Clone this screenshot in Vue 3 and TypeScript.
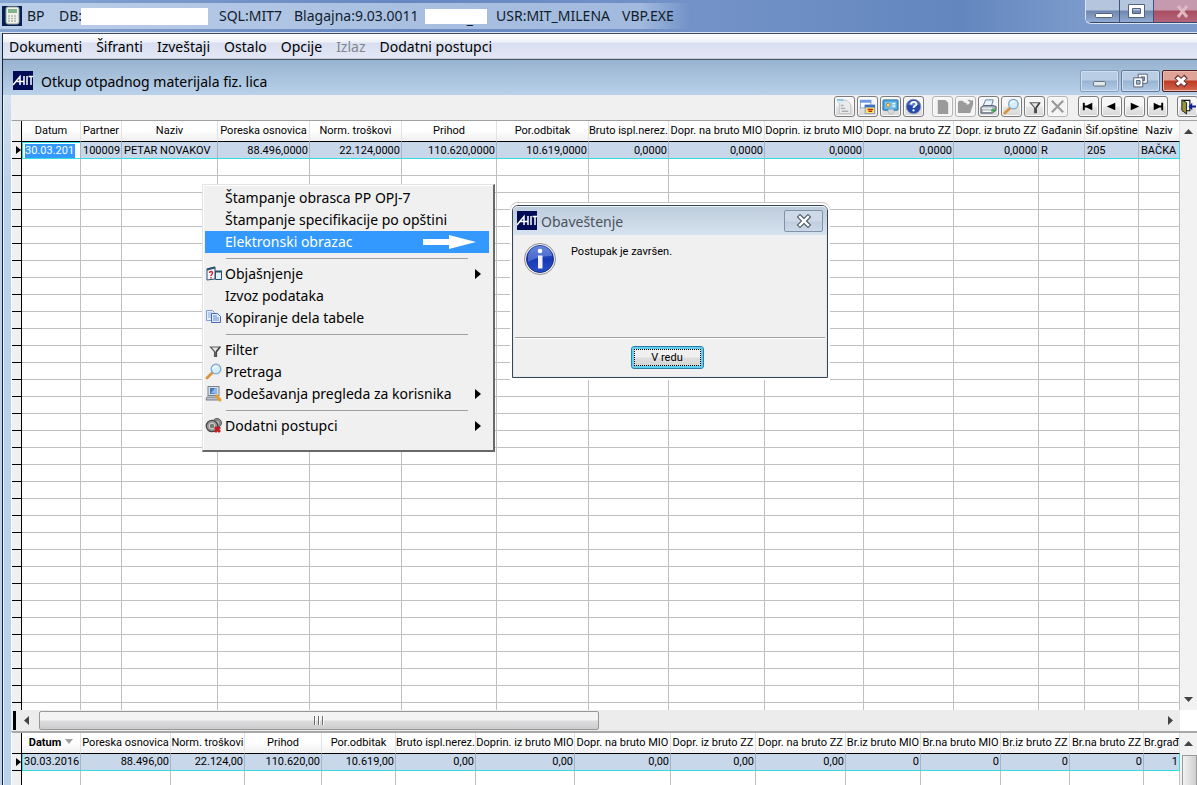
<script setup lang="ts">
import { ref } from 'vue'

interface Column {
  label: string
  value: string
  width: number | null
  align?: 'left' | 'right'
}

const mainColumns: Column[] = [
  { label: 'Datum', value: '30.03.201', width: 59, align: 'left' },
  { label: 'Partner', value: '100009', width: 41 },
  { label: 'Naziv', value: 'PETAR NOVAKOV', width: 96, align: 'left' },
  { label: 'Poreska osnovica', value: '88.496,0000', width: 92 },
  { label: 'Norm. troškovi', value: '22.124,0000', width: 92 },
  { label: 'Prihod', value: '110.620,0000', width: 95 },
  { label: 'Por.odbitak', value: '10.619,0000', width: 92 },
  { label: 'Bruto ispl.nerez.', value: '0,0000', width: 80 },
  { label: 'Dopr. na bruto MIO', value: '0,0000', width: 96 },
  { label: 'Doprin. iz bruto MIO', value: '0,0000', width: 99 },
  { label: 'Dopr. na bruto ZZ', value: '0,0000', width: 90 },
  { label: 'Dopr. iz bruto ZZ', value: '0,0000', width: 85 },
  { label: 'Gađanin', value: 'R', width: 46, align: 'left' },
  { label: 'Šif.opštine', value: '205', width: 54, align: 'left' },
  { label: 'Naziv', value: 'BAČKA', width: null, align: 'left' },
]

const totalColumns: Column[] = [
  { label: 'Datum', value: '30.03.2016', width: 59, align: 'left' },
  { label: 'Poreska osnovica', value: '88.496,00', width: 90 },
  { label: 'Norm. troškovi', value: '22.124,00', width: 74 },
  { label: 'Prihod', value: '110.620,00', width: 77 },
  { label: 'Por.odbitak', value: '10.619,00', width: 74 },
  { label: 'Bruto ispl.nerez.', value: '0,00', width: 80 },
  { label: 'Doprin. iz bruto MIO', value: '0,00', width: 99 },
  { label: 'Dopr. na bruto MIO', value: '0,00', width: 96 },
  { label: 'Dopr. iz bruto ZZ', value: '0,00', width: 85 },
  { label: 'Dopr. na bruto ZZ', value: '0,00', width: 90 },
  { label: 'Br.iz bruto MIO', value: '0', width: 75 },
  { label: 'Br.na bruto MIO', value: '0', width: 80 },
  { label: 'Br.iz bruto ZZ', value: '0', width: 69 },
  { label: 'Br.na bruto ZZ', value: '0', width: 74 },
  { label: 'Br.građ', value: '1', width: null },
]

const menus = ['Dokumenti', 'Šifranti', 'Izveštaji', 'Ostalo', 'Opcije', 'Izlaz', 'Dodatni postupci']

interface Entry {
  text?: string
  icon?: string
  sub?: boolean
  active?: boolean
}

const entries: Entry[] = [
  { text: 'Štampanje obrasca PP OPJ-7' },
  { text: 'Štampanje specifikacije po opštini' },
  { text: 'Elektronski obrazac', active: true },
  {},
  { text: 'Objašnjenje', icon: 'explain', sub: true },
  { text: 'Izvoz podataka' },
  { text: 'Kopiranje dela tabele', icon: 'copy' },
  {},
  { text: 'Filter', icon: 'filter' },
  { text: 'Pretraga', icon: 'search' },
  { text: 'Podešavanja pregleda za korisnika', icon: 'settings', sub: true },
  {},
  { text: 'Dodatni postupci', icon: 'gears', sub: true },
]

const toolGroups = [
  [
    { id: 'form', label: 'Obrazac' },
    { id: 'windows', label: 'Prozori' },
    { id: 'card', label: 'Kartica' },
    { id: 'help', label: 'Pomoć' },
  ],
  [
    { id: 'new', label: 'Novi', off: true },
    { id: 'open', label: 'Otvori', off: true },
    { id: 'print', label: 'Štampa' },
    { id: 'search', label: 'Pretraga' },
    { id: 'filter', label: 'Filter' },
    { id: 'delete', label: 'Brisanje', off: true },
  ],
  [
    { id: 'first', label: 'Prvi' },
    { id: 'prev', label: 'Prethodni' },
    { id: 'next', label: 'Sledeći' },
    { id: 'last', label: 'Poslednji' },
  ],
  [{ id: 'exit', label: 'Izlaz' }],
]

const dialogOpen = ref(true)
</script>

<template>
  <div class="app">
    <header class="titlebar">
      <svg class="app-icon" viewBox="0 0 20 20">
        <rect width="20" height="20" fill="#081f56" />
        <rect x="4" y="1" width="13" height="17" rx="2" fill="#eef0ea" stroke="#9ba79d" />
        <rect x="6" y="3" width="9" height="4" fill="#83b58d" />
        <path d="M6 10h2m1 0h2m1 0h2M6 12.500h2m1 0h2m1 0h2M6 15h2m1 0h2m1 0h2" stroke="#b3b5ae" stroke-width="1.500" />
      </svg>
      <span>BP</span>
      <span>DB:</span>
      <span class="mask"></span>
      <span>SQL:MIT7</span>
      <span>Blagajna:9.03.0011</span>
      <span class="mask short"><i>_</i></span>
      <span>USR:MIT_MILENA</span>
      <span>VBP.EXE</span>
      <div class="top-buttons">
        <button aria-label="Umanji"><svg viewBox="0 0 34 22"><rect x="9.500" y="13.500" width="17" height="4" rx="1" fill="#fff" stroke="#54647e" /></svg></button>
        <button aria-label="Uvećaj"><svg viewBox="0 0 34 22"><path d="M8.500 4.500h16v13h-16zM12.500 8.500h8v5h-8z" fill="#fff" fill-rule="evenodd" stroke="#54647e" /></svg></button>
        <button class="red" aria-label="Zatvori"><svg viewBox="0 0 44 22"><path d="M24 6l9 11M33 6l-9 11" stroke="#dfb9c0" stroke-width="3" /></svg></button>
      </div>
    </header>

    <div class="body">
      <nav class="menubar">
        <button v-for="m in menus" :key="m" :disabled="m === 'Izlaz'">{{ m }}</button>
      </nav>

      <section class="child">
        <header class="child-title">
          <svg class="mit" viewBox="0 0 20 19">
            <rect width="20" height="19" fill="#020b56" />
            <path d="M0 14L7 5.500V14M3 10.500h8M11 5v9M14 5v9M15.500 5.500h4.500M18 5v9" fill="none" stroke="#fff" stroke-width="1.500" />
          </svg>
          <h1>Otkup otpadnog materijala fiz. lica</h1>
          <div class="child-buttons">
            <button aria-label="Umanji prozor"><svg viewBox="0 0 38 22"><rect x="12.500" y="11.500" width="13" height="5" rx="1" fill="#e4e9ec" stroke="#5b6672" /></svg></button>
            <button aria-label="Vrati prozor"><svg viewBox="0 0 38 22"><path d="M16.500 3.500h10v10h-10z" fill="#fff" stroke="#4d5d70" /><path d="M19.500 6.500h4v4h-4z" fill="#8aa3bf" stroke="#4d5d70" /><path d="M11.500 7.500h10v10h-10z" fill="#fff" stroke="#4d5d70" /><path d="M14.500 10.500h4v4h-4z" fill="#a9bfd8" stroke="#4d5d70" /></svg></button>
            <button class="red" aria-label="Zatvori prozor"><svg viewBox="0 0 38 22"><path d="M13 6l11 10M24 6L13 16" stroke="#6e3434" stroke-width="5.500" /><path d="M14 7l9 8M23 7l-9 8" stroke="#fff" stroke-width="3.600" /></svg></button>
          </div>
        </header>

        <div class="workspace">
          <div class="toolbar">
            <div v-for="(g, i) in toolGroups" :key="i" class="group">
              <button v-for="t in g" :key="t.id" :aria-label="t.label" :disabled="'off' in t && t.off">
                <svg viewBox="0 0 18 18">
                  <g v-if="t.id === 'form'">
                    <path d="M3.500 2.500h8l4 4v10h-12z" fill="#e9ebed" stroke="#c0c5ca" />
                    <path d="M1 1.500h7v4H1z" fill="#d7ebf5" />
                    <path d="M1 2h7" stroke="#8fc3de" stroke-width="2" />
                    <path d="M5 8h3M5 11h5M6 14h7" stroke="#adadad" stroke-width="1.500" />
                  </g>
                  <g v-else-if="t.id === 'windows'">
                    <rect x="1.500" y="2.500" width="11" height="8" fill="#fff" stroke="#8aa7dc" />
                    <rect x="1" y="2" width="12" height="3" fill="#6d9be3" />
                    <rect x="6.500" y="8.500" width="10" height="8" fill="#ffe566" stroke="#8d9dbd" />
                    <rect x="6" y="7" width="11" height="3" fill="#3e70c9" />
                    <path d="M9 12h6M10 14h4" stroke="#bd2610" stroke-width="1.500" />
                  </g>
                  <g v-else-if="t.id === 'card'">
                    <rect x="1" y="2" width="16" height="11" rx="1" fill="#48a9df" stroke="#276d9e" />
                    <rect x="3" y="4" width="12" height="7" fill="#79c4ed" />
                    <circle cx="6.500" cy="7.500" r="2" fill="#ffe4a0" stroke="#c37c36" />
                    <path d="M11 6h3M11 8.500h3" stroke="#fff" stroke-width="1.300" />
                    <path d="M7 12h5l1 2-2 3H8l-2-3z" fill="#d7dadc" stroke="#9da8ad" stroke-width=".6" />
                  </g>
                  <g v-else-if="t.id === 'help'">
                    <circle cx="9" cy="9" r="7.700" fill="#2548a9" stroke="#8e97ab" />
                    <path d="M3 7a6.500 6 0 0 1 12 0q-6 3-12 0" fill="#6182cd" />
                    <path d="M6.500 7c0-4 5.500-3.500 5.500-.5 0 2-3 2-3 4" fill="none" stroke="#fff" stroke-width="1.900" />
                    <circle cx="9" cy="13.200" r="1.200" fill="#fff" />
                  </g>
                  <path v-else-if="t.id === 'new'" d="M4 2h8l3 3v12H4z" fill="#9b9b9b" />
                  <path v-else-if="t.id === 'open'" d="M1 5l1-2h4l2 2h2v2h7l-3 9H1zM11 3c2-2 3-1 4 0l2-1v5h-5l2-2q-1-2-3-2" fill="#9b9b9b" />
                  <g v-else-if="t.id === 'print'">
                    <path d="M6 2h8l-2 7H3z" fill="#e8f4ff" stroke="#5c7fa4" />
                    <path d="M1 10l3-2h10l3 1v4l-4 3H1z" fill="#a3adb8" stroke="#4f5967" />
                    <path d="M2 10h11v2H2z" fill="#e7eaee" />
                    <path d="M3 14h9" stroke="#fff" stroke-width="1.500" />
                    <rect x="12" y="12" width="4" height="2" fill="#22b53a" />
                  </g>
                  <g v-else-if="t.id === 'search'">
                    <path d="M2 16l5-5" stroke="#dc933d" stroke-width="3" stroke-linecap="round" />
                    <circle cx="11" cy="6.500" r="5" fill="#d2edfc" stroke="#81a5c8" stroke-width="1.400" />
                    <path d="M8 6c0-2 2-3 4-2" fill="none" stroke="#fff" stroke-width="1.300" />
                  </g>
                  <g v-else-if="t.id === 'filter'">
                    <path d="M4.500 5h10L11 10v5.500H9V10z" fill="#e6e6e6" stroke="#5c5c5c" stroke-width="1.200" />
                    <path d="M11 10l3.500-5M10.500 10v5.500" stroke="#444" stroke-width="1.800" />
                  </g>
                  <path v-else-if="t.id === 'delete'" d="M3 3l12 12M15 3L3 15" stroke="#999" stroke-width="2.300" />
                  <path v-else-if="t.id === 'first'" d="M3 5h2v3h2l6-3v8l-6-3H5v3H3z" />
                  <path v-else-if="t.id === 'prev'" d="M4 9l9-4v8z" />
                  <path v-else-if="t.id === 'next'" d="M14 9L5 5v8z" />
                  <path v-else-if="t.id === 'last'" d="M15 5h-2v3h-2L5 5v8l6-3h2v3h2z" />
                  <g v-else>
                    <path d="M3.500 2.500h8v11h-8" fill="#f8f8f0" stroke="#111" stroke-width="1.200" />
                    <path d="M3 2l5 3v12l-5-4z" fill="#96933b" stroke="#222" />
                    <path d="M10 9l4-4v3h4v2h-4v3z" fill="#101d9c" />
                  </g>
                </svg>
              </button>
            </div>
          </div>

          <div class="grid-area main">
            <div class="scroller">
              <table>
                <colgroup>
                  <col class="gutter-col" />
                  <col v-for="(c, i) in mainColumns" :key="i" :style="c.width ? { width: c.width + 'px' } : {}" />
                </colgroup>
                <thead>
                  <tr>
                    <th class="gutter"></th>
                    <th v-for="(c, i) in mainColumns" :key="i">{{ c.label }}</th>
                  </tr>
                </thead>
                <tbody>
                  <tr class="current">
                    <td class="gutter"><i class="marker"></i></td>
                    <td v-for="(c, i) in mainColumns" :key="i" :class="[c.align || 'right', { editing: i === 0 }]">
                      <span v-if="i === 0" class="sel">{{ c.value }}</span>
                      <template v-else>{{ c.value }}</template>
                    </td>
                  </tr>
                  <tr v-for="r in 70" :key="r">
                    <td class="gutter"></td>
                    <td v-for="(c, i) in mainColumns" :key="i"></td>
                  </tr>
                </tbody>
              </table>
            </div>
            <div class="vscroll">
              <svg viewBox="0 0 9 5"><path d="M0 5L4.500 0 9 5z" fill="#444" /></svg>
              <svg viewBox="0 0 9 5"><path d="M0 0h9L4.500 5z" fill="#444" /></svg>
            </div>
          </div>

          <div class="hscroll">
            <span class="split"></span>
            <svg viewBox="0 0 5 9"><path d="M5 0v9L0 4.500z" fill="#444" /></svg>
            <div class="track"><div class="thumb"><i></i><i></i><i></i></div></div>
            <svg viewBox="0 0 5 9"><path d="M0 0v9l5-4.500z" fill="#444" /></svg>
          </div>

          <div class="grid-area totals">
            <div class="scroller">
              <table>
                <colgroup>
                  <col class="gutter-col" />
                  <col v-for="(c, i) in totalColumns" :key="i" :style="c.width ? { width: c.width + 'px' } : {}" />
                </colgroup>
                <thead>
                  <tr>
                    <th class="gutter"></th>
                    <th v-for="(c, i) in totalColumns" :key="i" :class="{ sorted: i === 0 }">{{ c.label }}<i v-if="i === 0" class="sort"></i></th>
                  </tr>
                </thead>
                <tbody>
                  <tr class="current">
                    <td class="gutter"><i class="marker"></i></td>
                    <td v-for="(c, i) in totalColumns" :key="i" :class="c.align || 'right'">{{ c.value }}</td>
                  </tr>
                  <tr class="rest">
                    <td class="gutter"></td>
                    <td v-for="(c, i) in totalColumns" :key="i"></td>
                  </tr>
                </tbody>
              </table>
            </div>
            <div class="vscroll with-thumb">
              <svg viewBox="0 0 9 5"><path d="M0 5L4.500 0 9 5z" fill="#444" /></svg>
              <div class="vthumb"></div>
            </div>
          </div>
        </div>
      </section>
    </div>

    <div class="context" role="menu">
      <template v-for="(e, i) in entries" :key="i">
        <hr v-if="!e.text" />
        <button v-else role="menuitem" :class="{ active: e.active }">
          <svg class="entry-icon" viewBox="0 0 18 18">
            <g v-if="e.icon === 'explain'">
              <path d="M2 4l8-2v12l-8 1z" fill="#f4f8fc" stroke="#2a5170" />
              <path d="M2 4.500l8-2" stroke="#2a5170" stroke-width="2" />
              <path d="M4.500 8c0-2 3-2 3 0 0 1.500-1.500 1.500-1.500 3M6 12v1.500" fill="none" stroke="#d2232a" stroke-width="1.400" />
              <path d="M10.500 6.500h6v8h-6z" fill="#e4f0fa" stroke="#2a5170" />
              <path d="M10 6.500h7" stroke="#2a5170" stroke-width="2" />
            </g>
            <g v-else-if="e.icon === 'copy'">
              <path d="M1.500 1.500h6l2 2v8h-8z" fill="#e3edfb" stroke="#7f9fd2" />
              <path d="M3 4h4M3 6h4M3 8h4" stroke="#90aee0" />
              <path d="M6.500 4.500h6l3 3v6h-9z" fill="#e3edfb" stroke="#4769ae" />
              <path d="M8 7h4M8 9h6M8 11h6" stroke="#6689ce" />
            </g>
            <g v-else-if="e.icon === 'filter'">
              <path d="M5.500 6h9.500L11.500 10.500v5h-2v-5z" fill="#e6e6e6" stroke="#5c5c5c" stroke-width="1.200" />
              <path d="M11.500 10.500L15 6M11 10.500v5" stroke="#444" stroke-width="1.600" />
            </g>
            <g v-else-if="e.icon === 'search'">
              <path d="M2 15l5-5" stroke="#dc933d" stroke-width="2.800" stroke-linecap="round" />
              <circle cx="11" cy="6" r="4.800" fill="#d2edfc" stroke="#81a5c8" stroke-width="1.300" />
              <path d="M8 6c0-2 2-3 4-2" fill="none" stroke="#fff" stroke-width="1.300" />
            </g>
            <g v-else-if="e.icon === 'settings'">
              <rect x="3" y="1.500" width="11" height="9" fill="#d6dde5" stroke="#7a828c" />
              <rect x="5" y="3" width="7" height="6" fill="#4478c0" />
              <path d="M6 8l4-5h2v6z" fill="#8fb6e4" />
              <path d="M2 12h11l1 3H1z" fill="#b9c0c9" stroke="#7a828c" />
              <path d="M12 11l3 4" stroke="#e3a02c" stroke-width="3" stroke-linecap="round" />
            </g>
            <g v-else-if="e.icon === 'gears'">
              <circle cx="12" cy="6" r="4.500" fill="#8e8e8e" stroke="#5c5c5c" />
              <circle cx="12" cy="6" r="2" fill="#bbb" />
              <circle cx="7" cy="9" r="5.700" fill="#9a9a9a" stroke="#484848" stroke-width="1.300" />
              <circle cx="7" cy="9" r="2.800" fill="#777" stroke="#d5d5d5" />
              <path d="M10 10l5 5M15 10l-5 5" stroke="#c61a22" stroke-width="2.800" />
            </g>
          </svg>
          <span>{{ e.text }}</span>
          <svg v-if="e.active" class="pointer" viewBox="0 0 53 14"><path d="M0 4h26V0l27 7-27 7v-4H0z" fill="#fff" /></svg>
          <svg v-if="e.sub" class="sub" viewBox="0 0 6 10"><path d="M0 0l6 5-6 5z" /></svg>
        </button>
      </template>
    </div>

    <div v-if="dialogOpen" class="dialog" role="dialog" aria-labelledby="dialog-title">
      <header>
        <svg class="mit" viewBox="0 0 20 19">
          <rect width="20" height="19" fill="#020b56" />
          <path d="M0 14L7 5.500V14M3 10.500h8M11 5v9M14 5v9M15.500 5.500h4.500M18 5v9" fill="none" stroke="#fff" stroke-width="1.500" />
        </svg>
        <h2 id="dialog-title">Obaveštenje</h2>
        <button class="close" aria-label="Zatvori" @click="dialogOpen = false">
          <svg viewBox="0 0 16 14"><path d="M4 3l8 8M12 3l-8 8" stroke="#525c6a" stroke-width="4.600" stroke-linecap="square" /><path d="M4 3l8 8M12 3l-8 8" stroke="#fff" stroke-width="2.400" stroke-linecap="square" /></svg>
        </button>
      </header>
      <div class="message">
        <svg viewBox="0 0 32 32">
          <defs>
            <linearGradient id="info" x1="0" y1="0" x2="0" y2="1">
              <stop offset="0" stop-color="#4a74d8" />
              <stop offset=".5" stop-color="#1a39b4" />
              <stop offset="1" stop-color="#2450c8" />
            </linearGradient>
          </defs>
          <circle cx="16" cy="16" r="15.500" fill="#f4f4f4" stroke="#8f8f8f" />
          <circle cx="16" cy="16" r="13.500" fill="url(#info)" stroke="#1a2d8c" />
          <path d="M4 14a12 11 0 0 1 24-1q-12-1-24 6z" fill="#7d9ae6" opacity=".5" />
          <circle cx="16" cy="8" r="2.300" fill="#fff" />
          <path d="M14 12.500h4.500v13H14z" fill="#f2f2f2" />
        </svg>
        <p>Postupak je završen.</p>
      </div>
      <footer><button class="ok" @click="dialogOpen = false">V redu</button></footer>
    </div>
  </div>
</template>

<style>
body {
  margin: 0;
}
</style>

<style scoped>
.app,
.app * {
  box-sizing: border-box;
}
.app {
  position: relative;
  display: flex;
  flex-direction: column;
  height: 100vh;
  overflow: hidden;
  background: #bcd2ea;
  color: #000;
  font: 14px/20px "Noto Sans", "Open Sans", sans-serif;
}
button {
  margin: 0;
  padding: 0;
  border: 0;
  background: none;
  color: inherit;
  font: inherit;
}
svg {
  display: block;
  flex: none;
}

.titlebar {
  display: grid;
  grid-template-columns: 25px 32px 22px 138px 75px 131px 71px 126px 1fr auto;
  align-items: center;
  flex: none;
  height: 33px;
  padding-left: 2px;
  border-bottom: 1px solid #dfe6f2;
  background:
    linear-gradient(90deg, rgba(190, 208, 234, .95) 0, rgba(170, 193, 226, .85) 640px, rgba(170, 193, 226, 0) 690px) 0 3px / 100% 26px no-repeat,
    linear-gradient(90deg, #86a4d2 0, #6687c0 400px, #7393c8 700px, #6386bf 960px, #7b9acb 1080px);
  color: #111c2c;
  white-space: nowrap;
}
.app-icon {
  width: 20px;
  height: 20px;
}
.mask {
  width: 127px;
  height: 17px;
  background: #fff;
}
.mask.short {
  display: flex;
  justify-content: flex-end;
  align-items: flex-end;
  width: 62px;
  height: 15px;
  padding-right: 14px;
  line-height: 11px;
}
.mask i {
  font-style: normal;
}
.top-buttons {
  display: flex;
  align-self: start;
  width: 112px;
  height: 24px;
  overflow: hidden;
  border: 1px solid #dbe4f3;
  border-top: 0;
  border-right: 0;
  border-radius: 0 0 0 6px;
  box-shadow: inset 1px -1px 0 #34486c;
}
.top-buttons button {
  flex: none;
  width: 34px;
  height: 22px;
  border-right: 1px solid #3f5477;
  background: linear-gradient(#b5c5dd 0 10px, #6d87ae 11px, #93abd0);
}
.top-buttons svg {
  width: 34px;
  height: 22px;
}
.top-buttons .red {
  width: 44px;
  background: linear-gradient(#c59aae 0 10px, #a94e62 11px, #b4647c);
}
.top-buttons .red svg {
  width: 44px;
}

.body {
  display: flex;
  flex: 1;
  flex-direction: column;
  min-height: 0;
  margin-left: 2px;
  border-left: 1px solid #17202c;
}
.menubar {
  display: flex;
  flex: none;
  gap: 14px;
  height: 27px;
  padding-left: 6px;
  border-top: 1px solid #3a4a68;
  border-bottom: 1px solid #4a5566;
  background: linear-gradient(#fff 0, #eef1f9 8px, #d9dff0 9px, #e3e7f5 24px, #a3a9b8 25px);
}
.menubar button:disabled {
  color: #83868f;
}
.child {
  display: flex;
  flex: 1;
  flex-direction: column;
  min-height: 0;
}
.child-title {
  display: flex;
  align-items: center;
  flex: none;
  height: 35px;
  padding: 6px 0 0 10px;
  background: linear-gradient(#98b3d0, #b9d1e9);
}
.mit {
  width: 20px;
  height: 19px;
}
h1,
h2 {
  margin: 0;
  font-size: 14px;
  font-weight: 400;
}
h1 {
  flex: 1;
  margin-left: 8px;
  padding-top: 2px;
}
.child-buttons {
  display: flex;
  gap: 2px;
  width: 117px;
  overflow: hidden;
}
.child-buttons button {
  flex: none;
  width: 39px;
  height: 22px;
  border: 1px solid #62799a;
  border-radius: 2px;
  background: linear-gradient(#b9cde4 0 9px, #98b3d2 10px, #b3cbe5);
  box-shadow: inset 0 0 0 1px #cfdeee;
}
.child-buttons button:first-child {
  border-color: #869fbf;
}
.child-buttons svg {
  width: 37px;
  height: 20px;
}
.child-buttons .red {
  border-color: #541f1f;
  background: linear-gradient(#e0a398 0 9px, #bd3a24 10px, #d4674c);
  box-shadow: inset 0 0 0 1px #e9b8ae;
}
.workspace {
  display: flex;
  flex: 1;
  flex-direction: column;
  min-height: 0;
  padding-left: 7px;
  border-left: 1px solid #eaf2fa;
  background: linear-gradient(#d3e1f0, #b9d1ea 90px);
}
.toolbar {
  display: flex;
  justify-content: flex-end;
  flex: none;
  gap: 9px;
  height: 25px;
  padding-top: 1px;
  overflow: hidden;
  background: #f0f0f0;
}
.group {
  display: flex;
  gap: 2px;
}
.group:nth-child(1) {
  margin-right: -1px;
}
.group:nth-child(2) {
  margin-right: 1px;
}
.group:last-child {
  width: 20px;
}
.group button {
  flex: none;
  width: 21px;
  height: 21px;
  padding: 1px;
  border: 1px solid #7c7c7c;
  border-radius: 3px;
  background: linear-gradient(#f6f6f6 0 9px, #e6e6e6 10px, #d8d8d8);
  box-shadow: inset 0 0 0 1px #fafafa;
}
.group button:disabled {
  border-color: #b4b4b4;
  background: #f4f4f4;
}
.group svg {
  width: 17px;
  height: 17px;
}

.grid-area {
  display: flex;
  flex: none;
  min-height: 0;
  border-left: 1px solid #fff;
  background: #fff;
  font: 11px/16px Roboto, "Liberation Sans", sans-serif;
}
.main {
  flex: 1 1 0;
  border-top: 1px solid #a0a0a0;
}
.totals {
  height: 54px;
  border-top: 2px solid #a8a8a8;
}
.scroller {
  flex: 1;
  min-width: 0;
  overflow: hidden;
}
table {
  width: 100%;
  border-spacing: 0;
  table-layout: fixed;
}
.gutter-col {
  width: 10px;
}
th,
td {
  height: 17px;
  padding: 0 2px;
  overflow: hidden;
  border-right: 1px solid #c0c0c0;
  border-bottom: 1px solid #c0c0c0;
  text-align: center;
  white-space: nowrap;
}
th {
  height: 21px;
  padding: 0;
  border-right-color: #e2e2e2;
  border-bottom-color: #000;
  background: linear-gradient(#fff 0 9px, #f3f3f5 17px);
  font-weight: 400;
}
.gutter {
  padding: 0;
  border-right-color: #000;
  border-bottom-color: #000;
  background: #f0f0f0;
}
.left {
  text-align: left;
}
.right {
  padding-right: 1px;
  text-align: right;
}
.current td:not(.gutter) {
  border-right-color: #a9b4c2;
  border-bottom-color: #35dede;
  background: #c8d7e9;
}
.current td:nth-child(2) {
  border-left: 1px solid #35dede;
}
.current td:last-child {
  border-right-color: #35dede !important;
}
.current .editing {
  padding-left: 2px;
  border-top: 1px solid #35dede;
  background: #fff !important;
}
.main .current td {
  line-height: 15px;
}
.main .current .editing {
  line-height: 14px;
}
.totals .current td:nth-child(2) {
  padding-left: 1px;
}
.sel {
  display: block;
  width: 50px;
  overflow: hidden;
  background: #3399ff;
  color: #fff;
}
.marker {
  display: block;
  margin-left: 4px;
  border: 4px solid transparent;
  border-right: 0;
  border-left: 5px solid #000;
}
.sorted {
  font-weight: 700;
}
.sort {
  display: inline-block;
  margin-left: 4px;
  border: 4px solid transparent;
  border-top: 5px solid #a0a0a0;
  border-bottom: 0;
  vertical-align: 2px;
}
.rest td {
  border-bottom: 0;
}
.vscroll {
  display: flex;
  flex: none;
  flex-direction: column;
  justify-content: space-between;
  align-items: center;
  width: 17px;
  padding: 8px 0;
  background: #f2f2f2;
}
.vscroll svg {
  width: 9px;
  height: 5px;
}
.with-thumb {
  justify-content: flex-start;
  gap: 9px;
  padding-bottom: 0;
}
.vthumb {
  flex: 1;
  align-self: stretch;
  margin-left: 2px;
  border: 1px solid #9a9a9a;
  border-bottom: 0;
  background: linear-gradient(90deg, #f2f2f2, #cfcfd1);
}
.hscroll {
  display: flex;
  align-items: center;
  flex: none;
  height: 21px;
  padding-right: 24px;
  background: linear-gradient(90deg, #ececec calc(100% - 17px), #fff 0);
}
.hscroll svg {
  width: 5px;
  height: 9px;
}
.split {
  width: 3px;
  height: 19px;
  margin: 0 8px 0 2px;
  background: #000;
}
.track {
  flex: 1;
  margin-left: 10px;
}
.thumb {
  display: flex;
  justify-content: center;
  align-items: center;
  gap: 2px;
  width: calc(50% - 5px);
  height: 19px;
  border: 1px solid #979797;
  border-radius: 2px;
  background: linear-gradient(#f3f3f3 0 8px, #dcdcdd 9px, #cdcdcf);
}
.thumb i {
  width: 2px;
  height: 9px;
  border-left: 1px solid #6b6b6b;
  background: #fff;
}

.context {
  position: absolute;
  top: 184px;
  left: 202px;
  width: 293px;
  padding: 2px 4px 13px 2px;
  border: 1px solid #e3e3e3;
  border-right: 2px solid #696969;
  border-bottom: 2px solid #696969;
  background: #f0f0f0;
  box-shadow: inset 1px 1px 0 #fff;
}
.context button {
  display: grid;
  grid-template-columns: 20px 1fr auto;
  align-items: center;
  width: 100%;
  height: 22px;
  padding-right: 8px;
  text-align: left;
  white-space: nowrap;
}
.context .active {
  padding-right: 13px;
  background: #3399ff;
  color: #fff;
}
.context hr {
  height: 10px;
  margin: 0 21px;
  border: 0;
  background: linear-gradient(#a0a0a0, #a0a0a0) 0 5px / 100% 1px no-repeat;
}
.entry-icon {
  width: 18px;
  height: 18px;
}
.pointer {
  width: 53px;
  height: 14px;
}
.sub {
  width: 6px;
  height: 10px;
}

.dialog {
  position: absolute;
  top: 205px;
  left: 512px;
  display: flex;
  flex-direction: column;
  width: 316px;
  height: 173px;
  border: 1px solid #3c4450;
  border-radius: 6px 6px 0 0;
  background: #f0f0f0;
  box-shadow: inset 0 0 0 1px #dfe9f3, 0 0 0 2px #fff, 0 -1px 0 2px #c4c4c4;
}
.dialog header {
  display: flex;
  align-items: center;
  height: 29px;
  padding: 0 4px;
  border-radius: 5px 5px 0 0;
  background: linear-gradient(#bccbdb, #d7e3ef);
  box-shadow: inset 0 1px 0 #e8eff6;
  color: #4d535b;
}
h2 {
  flex: 1;
  margin-left: 4px;
  padding-top: 2px;
}
.close {
  display: grid;
  place-items: center;
  width: 39px;
  height: 22px;
  border: 1px solid #8392ab;
  border-radius: 2px;
  background: linear-gradient(#cdd9e6 0 10px, #bfcddd 11px, #cbd8e7);
}
.close svg {
  width: 16px;
  height: 14px;
}
.message {
  display: flex;
  flex: 1;
  gap: 15px;
  padding: 8px 11px;
  font: 11px/16px Roboto, "Liberation Sans", sans-serif;
}
.message svg {
  width: 32px;
  height: 32px;
}
.message p {
  margin: 1px 0 0;
}
.dialog footer {
  display: flex;
  justify-content: center;
  height: 40px;
  margin: 0 2px;
  padding: 8px 6px 0 0;
  border-top: 1px solid #a0a0a0;
  box-shadow: inset 0 1px 0 #fff;
  font: 11px/16px Roboto, "Liberation Sans", sans-serif;
}
.ok {
  width: 73px;
  height: 23px;
  border: 1px solid #2c7cab;
  border-radius: 3px;
  outline: 1px dotted #000;
  outline-offset: -4px;
  background: linear-gradient(#f0f0f0 0 10px, #dedede 11px, #d2d2d2);
  box-shadow: inset 0 0 0 2px #5fd0f0;
}
</style>
